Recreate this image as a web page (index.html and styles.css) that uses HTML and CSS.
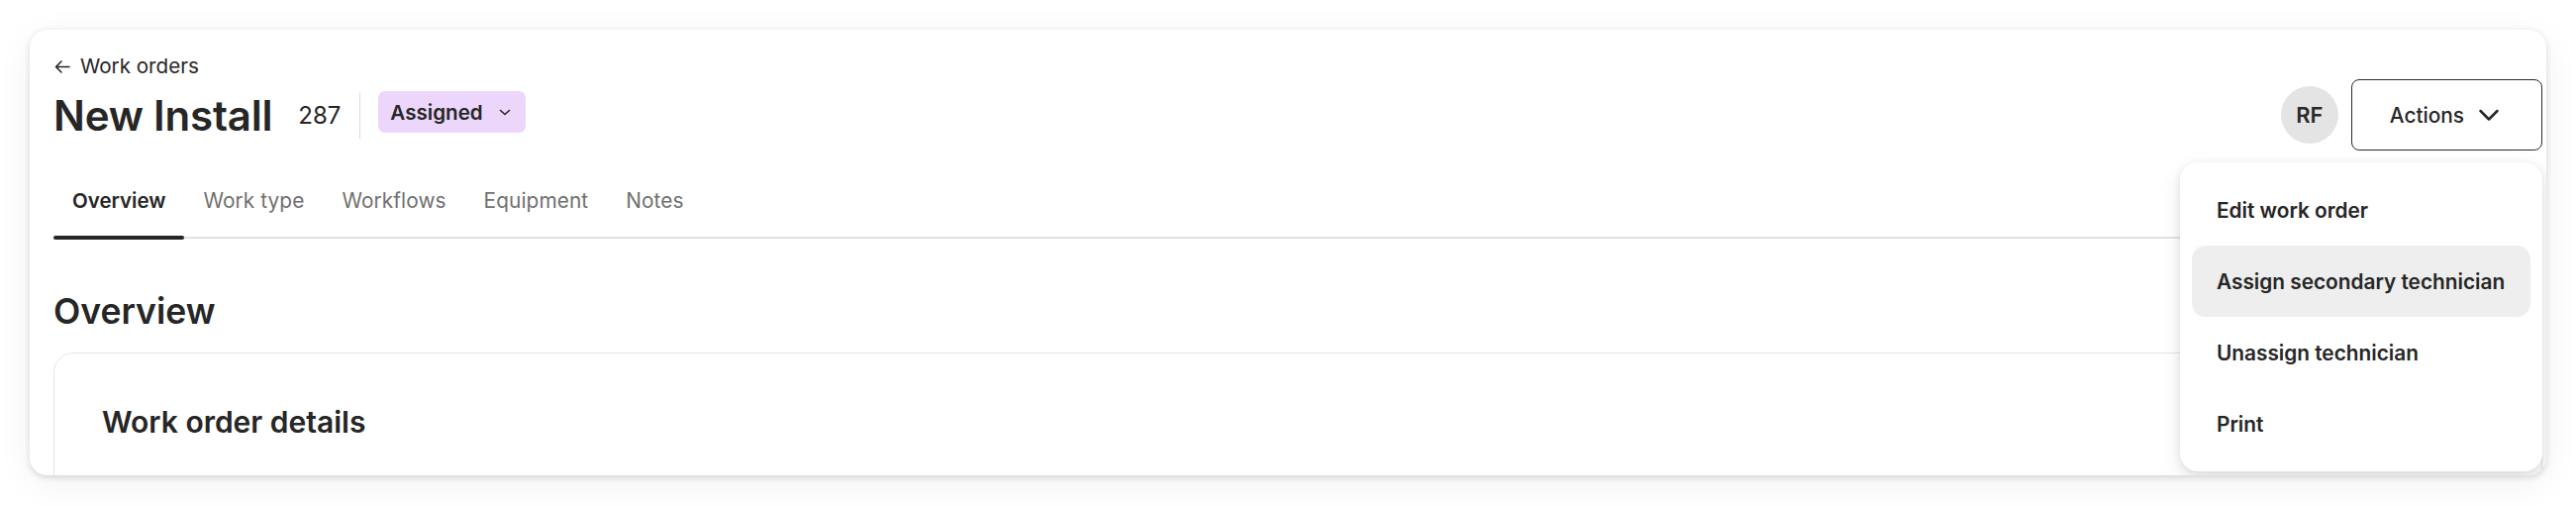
FILE: index.html
```html
<!DOCTYPE html>
<html lang="en">
<head>
<meta charset="utf-8">
<title>New Install – Work order</title>
<link rel="stylesheet" href="styles.css">
</head>
<body>
<main class="card">
  <header class="page-header">
    <a class="breadcrumb" href="#">
      <svg class="breadcrumb-icon" width="16" height="16" viewBox="0 0 16 16" fill="none" stroke="currentColor" stroke-width="1.6" stroke-linecap="round" stroke-linejoin="round"><path d="M15 8.5H2M7 3L1.5 8.5L7 14"/></svg>
      <span>Work orders</span>
    </a>
    <div class="title-row">
      <div class="title-group">
        <h1 class="title">New Install</h1>
        <span class="order-number">287</span>
        <span class="vdivider"></span>
        <button class="status-badge" type="button">
          <span>Assigned</span>
          <svg width="16" height="16" viewBox="0 0 16 16" fill="none" stroke="currentColor" stroke-width="1.6" stroke-linecap="round" stroke-linejoin="round"><path d="M3.5 6.5L8 10.5L12.5 6.5"/></svg>
        </button>
      </div>
      <div class="header-actions">
        <span class="avatar">RF</span>
        <div class="menu-wrap">
          <button class="actions-btn" type="button">
            <span>Actions</span>
            <svg width="24" height="24" viewBox="0 0 24 24" fill="none" stroke="currentColor" stroke-width="2.5" stroke-linecap="round" stroke-linejoin="round"><path d="M3.5 8L12 16.5L20.5 8"/></svg>
          </button>
          <ul class="menu">
            <li class="menu-item">Edit work order</li>
            <li class="menu-item is-hover">Assign secondary technician</li>
            <li class="menu-item">Unassign technician</li>
            <li class="menu-item">Print</li>
          </ul>
        </div>
      </div>
    </div>
  </header>

  <nav class="tabs">
    <a class="tab is-active" href="#">Overview</a>
    <a class="tab" href="#">Work type</a>
    <a class="tab" href="#">Workflows</a>
    <a class="tab" href="#">Equipment</a>
    <a class="tab" href="#">Notes</a>
  </nav>

  <h2 class="section-title">Overview</h2>

  <section class="panel">
    <h3 class="panel-title">Work order details</h3>
  </section>
</main>
</body>
</html>
```

FILE: styles.css
```css
* { box-sizing: border-box; }

html, body {
  margin: 0;
  padding: 0;
  background: #ffffff;
}

body {
  font-family: "Inter", "Noto Sans", "Liberation Sans", sans-serif;
  color: #262626;
  padding: 30px;
}

.card {
  height: 450px;
  background: #ffffff;
  border-radius: 18px;
  box-shadow: 0 2px 6px rgba(0, 0, 0, 0.14), 0 8px 36px rgba(0, 0, 0, 0.06);
  padding: 24px 4px 0 24px;
  overflow: hidden;
}

.page-header {
  display: flex;
  flex-direction: column;
}

.breadcrumb {
  display: flex;
  align-items: center;
  gap: 10px;
  height: 26px;
  font-size: 20.6px;
  line-height: 26px;
  color: #262626;
  text-decoration: none;
}

.breadcrumb-icon { margin-left: 1px; }

.title-row {
  display: flex;
  align-items: center;
  justify-content: space-between;
  height: 72px;
}

.title-group {
  display: flex;
  align-items: center;
}

.title {
  margin: 0 26px 0 0;
  font-size: 42px;
  font-weight: 600;
  line-height: normal;
  letter-spacing: -0.2px;
  color: #262626;
}

.order-number {
  font-size: 24px;
  line-height: normal;
  color: #262626;
}

.vdivider {
  width: 1px;
  height: 47px;
  background: #dedede;
  margin: 0 18px 0 19px;
}

.status-badge {
  display: flex;
  align-items: center;
  gap: 14px;
  height: 42px;
  margin-bottom: 6px;
  padding: 0 13px 0 12px;
  border: 0;
  border-radius: 7px;
  background: #ecd6fb;
  font-family: inherit;
  font-size: 20.6px;
  font-weight: 600;
  color: #262626;
}

.header-actions {
  display: flex;
  align-items: center;
  gap: 13px;
}

.avatar {
  display: flex;
  align-items: center;
  justify-content: center;
  width: 58px;
  height: 58px;
  border-radius: 50%;
  background: #e4e4e4;
  font-size: 22px;
  font-weight: 600;
  color: #2a2a2a;
}

.menu-wrap { position: relative; }

.actions-btn {
  display: flex;
  align-items: center;
  gap: 13px;
  height: 72px;
  padding: 0 41px 0 38px;
  background: #ffffff;
  border: 1.5px solid #2b2b2b;
  border-radius: 8px;
  font-family: inherit;
  font-size: 20.8px;
  font-weight: 500;
  color: #262626;
}

.menu {
  position: absolute;
  top: calc(100% + 12px);
  right: 0;
  width: 366px;
  margin: 0;
  padding: 12px;
  list-style: none;
  background: #ffffff;
  border-radius: 18px;
  box-shadow: 0 3px 10px rgba(0, 0, 0, 0.12), 0 10px 30px rgba(0, 0, 0, 0.06);
  z-index: 10;
}

.menu-item {
  display: flex;
  align-items: center;
  height: 72px;
  padding: 0 25px;
  border-radius: 14px;
  font-size: 20.8px;
  font-weight: 600;
  color: #262626;
  white-space: nowrap;
}

.menu-item.is-hover { background: #eeeeee; }

.tabs {
  display: flex;
  margin-top: 36px;
  border-bottom: 2px solid #e2e2e2;
}

.tab {
  position: relative;
  padding: 0 19px 21px;
  font-size: 20.8px;
  line-height: 30px;
  letter-spacing: 0.1px;
  color: #707070;
  text-decoration: none;
}

.tab.is-active {
  color: #262626;
  font-weight: 600;
  font-size: 20.5px;
  letter-spacing: 0;
}

.tab.is-active::after {
  content: "";
  position: absolute;
  left: 0;
  right: 0;
  bottom: -3px;
  height: 4px;
  border-radius: 2px;
  background: #262626;
}

.section-title {
  margin: 52px 0 20px;
  font-size: 35.5px;
  font-weight: 600;
  line-height: normal;
  color: #262626;
}

.panel {
  border: 1px solid #e4e4e4;
  border-radius: 20px;
  padding: 51px 48px 48px;
  min-height: 200px;
}

.panel-title {
  margin: 0;
  font-size: 30px;
  font-weight: 600;
  line-height: normal;
  color: #262626;
}
```
